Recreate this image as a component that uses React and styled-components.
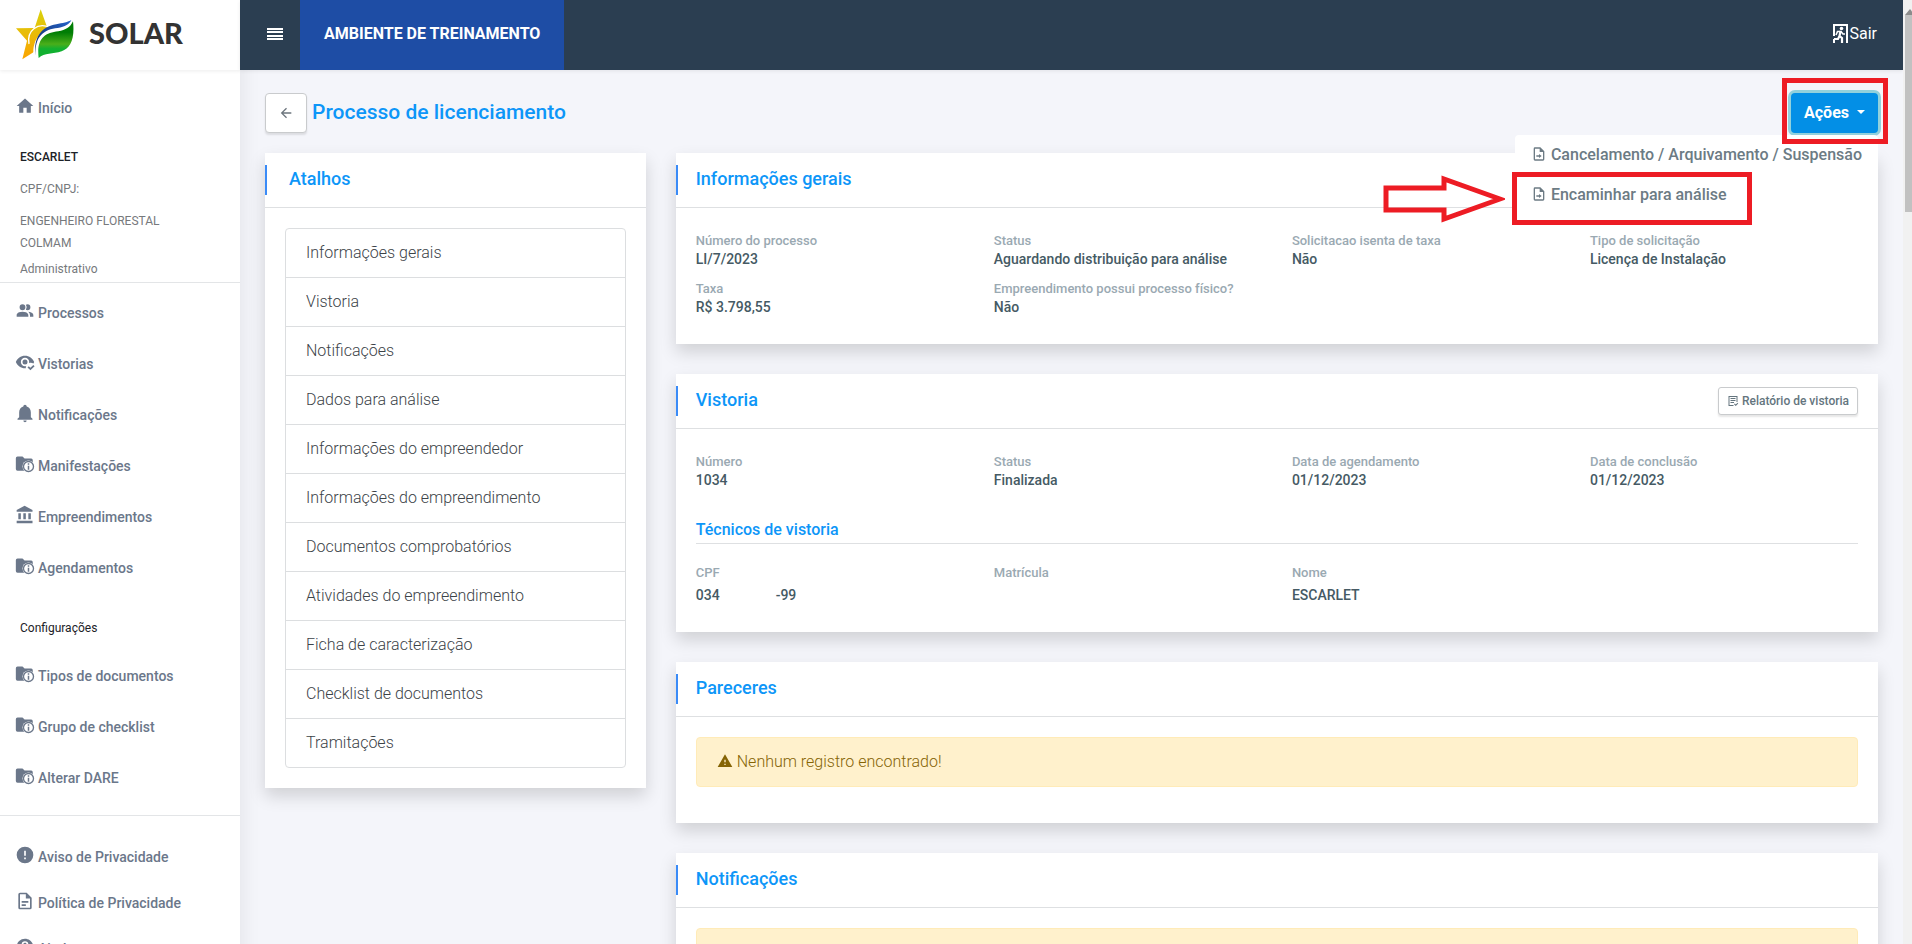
import React from 'react';
import styled, { createGlobalStyle } from 'styled-components';

const icons = {
    home: 'M10,20V14H14V20H19V12H22L12,3L2,12H5V20H10Z',
    people:
        'M16 17V19H2V17S2 13 9 13 16 17 16 17M12.5 7.5A3.5 3.5 0 1 0 9 11A3.5 3.5 0 0 0 12.5 7.5M15.94 13A5.32 5.32 0 0 1 18 17V19H22V17S22 13.37 15.94 13M15 4A3.39 3.39 0 0 0 13.07 4.59A5 5 0 0 1 13.07 10.41A3.39 3.39 0 0 0 15 11A3.5 3.5 0 0 0 15 4Z',
    eyeCheck:
        'M23.5,17L18.5,22L15,18.5L16.5,17L18.5,19L22,15.5L23.5,17M12,9A3,3 0 0,1 15,12A3,3 0 0,1 12,15A3,3 0 0,1 9,12A3,3 0 0,1 12,9M12,17C12.5,17 12.97,16.93 13.42,16.79C13.15,17.5 13,18.22 13,19V19.45L12,19.5C7,19.5 2.73,16.39 1,12C2.73,7.61 7,4.5 12,4.5C17,4.5 21.27,7.61 23,12C22.75,12.64 22.44,13.26 22.08,13.85C21.18,13.31 20.12,13 19,13C18.22,13 17.5,13.15 16.79,13.42C16.93,12.97 17,12.5 17,12A5,5 0 0,0 12,7A5,5 0 0,0 7,12A5,5 0 0,0 12,17Z',
    bell:
        'M21,19V20H3V19L5,17V11C5,7.9 7.03,5.17 10,4.29C10,4.19 10,4.1 10,4A2,2 0 0,1 12,2A2,2 0 0,1 14,4C14,4.1 14,4.19 14,4.29C16.97,5.17 19,7.9 19,11V17L21,19M14,21A2,2 0 0,1 12,23A2,2 0 0,1 10,21',
    bank: 'M11.5,1L2,6V8H21V6M16,10V17H19V10M2,22H21V19H2M10,10V17H13V10M4,10V17H7V10H4Z',
    alert:
        'M13,13H11V7H13M13,17H11V15H13M12,2A10,10 0 0,0 2,12A10,10 0 0,0 12,22A10,10 0 0,0 22,12A10,10 0 0,0 12,2Z',
    document:
        'M6,2A2,2 0 0,0 4,4V20A2,2 0 0,0 6,22H18A2,2 0 0,0 20,20V8L14,2H6M6,4H13V9H18V20H6V4M8,12V14H16V12H8M8,16V18H13V16H8Z',
    help:
        'M15.07,11.25L14.17,12.17C13.45,12.89 13,13.5 13,15H11V14.5C11,13.39 11.45,12.39 12.17,11.67L13.41,10.41C13.78,10.05 14,9.55 14,9C14,7.89 13.1,7 12,7A2,2 0 0,0 10,9H8A4,4 0 0,1 12,5A4,4 0 0,1 16,9C16,9.88 15.64,10.67 15.07,11.25M13,19H11V17H13M12,2A10,10 0 0,0 2,12A10,10 0 0,0 12,22A10,10 0 0,0 22,12C22,6.47 17.5,2 12,2Z',
    warning: 'M13,14H11V10H13M13,18H11V16H13M1,21H23L12,2L1,21Z',
    fileMove:
        'M6,2A2,2 0 0,0 4,4V20A2,2 0 0,0 6,22H18A2,2 0 0,0 20,20V8L14,2H6M6,4H13V9H18V20H6V4M8,14V16H12V18L16,15L12,12V14H8Z',
    arrowLeft: 'M20,11V13H8L13.5,18.5L12.08,19.92L4.16,12L12.08,4.08L13.5,5.5L8,11H20Z',
    report:
        'M3,2H21V14H19V4H5V20H13V22H3V2M7,6H17V8H7V6M7,10H17V12H7V10M7,14H14V16H7V14M22.5,17L17.5,22L14,18.5L15.5,17L17.5,19L21,15.5L22.5,17Z',
};

const Icon = ({ name, size = 20 }) => (
    <svg width={size} height={size} viewBox="0 0 24 24" fill="currentColor" aria-hidden="true">
        {name === 'folder' ? (
            <>
                <path d="M3 3H9L11.5 5.5H19.5A2 2 0 0 1 21.3 7.5V11H16L11 20H3A2 2 0 0 1 1 18V5A2 2 0 0 1 3 3Z" />
                <circle cx="16.2" cy="15" r="7.2" fill="#fff" />
                <circle cx="16.2" cy="15" r="6" fill="#fff" stroke="currentColor" strokeWidth="1.6" />
                <path d="M15.3 11H17.1V12.8H15.3ZM15.3 14H17.1V19H15.3Z" />
            </>
        ) : (
            <path d={icons[name]} fillRule="evenodd" />
        )}
    </svg>
);

const Logo = () => (
    <svg width="60" height="53" viewBox="44 24 180 159" aria-hidden="true">
        <defs>
            <linearGradient id="star" x1="0" y1="0" x2="0" y2="1">
                <stop offset="0" stopColor="#d8d20c" />
                <stop offset="1" stopColor="#fba300" />
            </linearGradient>
            <linearGradient id="leaf" x1="0" y1="0" x2="0" y2="1">
                <stop offset="0.3" stopColor="#007d05" />
                <stop offset="0.62" stopColor="#4aae1a" />
                <stop offset="0.75" stopColor="#12b030" />
            </linearGradient>
            <linearGradient id="wave" x1="0" y1="1" x2="1" y2="0">
                <stop offset="0" stopColor="#12285e" />
                <stop offset="1" stopColor="#2464cc" />
            </linearGradient>
        </defs>
        <path d="M121 28L139 78L170 84L110 150L66 178L80 122L47 85L103 84Z" fill="url(#star)" />
        <path d="M86 132C78 92 112 66 148 82" fill="none" stroke="#fff" strokeWidth="4" />
        <path d="M100 176C92 110 130 84 170 80C192 76 206 68 214 54L226 60L222 150L110 182Z" fill="#fff" />
        <path d="M106 167C102 108 132 88 172 84C194 80 208 72 213 60C204 66 186 69 168 73C124 80 98 112 106 167Z" fill="url(#wave)" />
        <path d="M115 174C108 118 132 98 174 94C196 90 210 82 218 64C224 118 210 144 184 154C158 163 132 158 115 174Z" fill="url(#leaf)" />
    </svg>
);

const ExitIcon = () => (
    <svg width="15" height="19" viewBox="0 0 15 19" fill="none" stroke="#fff" aria-hidden="true">
        <path d="M1 12V1H14V19M1 15V19" strokeWidth="2" />
        <circle cx="8.5" cy="4.5" r="1.8" fill="#fff" stroke="none" />
        <path d="M7.5 7L6.5 12L9 14V19M6.5 12L5 15H1" strokeWidth="2.2" />
        <path d="M3 11L4.5 7.5H8L10 10H12" strokeWidth="1.6" />
    </svg>
);

const menu = [
    ['people', 'Processos'],
    ['eyeCheck', 'Vistorias'],
    ['bell', 'Notificações'],
    ['folder', 'Manifestações'],
    ['bank', 'Empreendimentos'],
    ['folder', 'Agendamentos'],
];

const settings = ['Tipos de documentos', 'Grupo de checklist', 'Alterar DARE'];

const support = [
    ['alert', 'Aviso de Privacidade'],
    ['document', 'Política de Privacidade'],
    ['help', 'Ajuda'],
];

const shortcuts = [
    'Informações gerais',
    'Vistoria',
    'Notificações',
    'Dados para análise',
    'Informações do empreendedor',
    'Informações do empreendimento',
    'Documentos comprobatórios',
    'Atividades do empreendimento',
    'Ficha de caracterização',
    'Checklist de documentos',
    'Tramitações',
];

const general = [
    ['Número do processo', 'LI/7/2023'],
    ['Status', 'Aguardando distribuição para análise'],
    ['Solicitacao isenta de taxa', 'Não'],
    ['Tipo de solicitação', 'Licença de Instalação'],
    ['Taxa', 'R$ 3.798,55'],
    ['Empreendimento possui processo físico?', 'Não'],
];

const inspection = [
    ['Número', '1034'],
    ['Status', 'Finalizada'],
    ['Data de agendamento', '01/12/2023'],
    ['Data de conclusão', '01/12/2023'],
];

const MenuItem = ({ icon, children, compact }) => (
    <MenuLink href="#" $compact={compact}>
        <Icon name={icon} />
        {children}
    </MenuLink>
);

const Fields = ({ items }) => (
    <FieldGrid>
        {items.map(([label, value]) => (
            <Field key={label}>
                <Label>{label}</Label>
                <Value>{value}</Value>
            </Field>
        ))}
    </FieldGrid>
);

const Section = ({ title, action, wide, children }) => (
    <Card>
        <CardHeader>
            <CardTitle $wide={wide}>{title}</CardTitle>
            {action}
        </CardHeader>
        <CardBody>{children}</CardBody>
    </Card>
);

const EmptyMessage = () => (
    <Alert role="alert">
        <Icon name="warning" size={16} />
        Nenhum registro encontrado!
    </Alert>
);

export default function App() {
    return (
        <Page>
            <GlobalStyle />
            <Sidebar>
                <Brand>
                    <Logo />
                    <BrandName>SOLAR</BrandName>
                </Brand>
                <Nav>
                    <MenuItem icon="home">Início</MenuItem>
                    <User>
                        <UserName>ESCARLET</UserName>
                        <p>CPF/CNPJ:</p>
                        <p>
                            ENGENHEIRO FLORESTAL
                            <br />
                            COLMAM
                        </p>
                        <Role>Administrativo</Role>
                    </User>
                    <MenuGroup>
                        {menu.map(([icon, text]) => (
                            <MenuItem key={text} icon={icon}>
                                {text}
                            </MenuItem>
                        ))}
                    </MenuGroup>
                    <MenuCaption>Configurações</MenuCaption>
                    {settings.map(text => (
                        <MenuItem key={text} icon="folder">
                            {text}
                        </MenuItem>
                    ))}
                    <Support>
                        {support.map(([icon, text]) => (
                            <MenuItem key={text} icon={icon} compact>
                                {text}
                            </MenuItem>
                        ))}
                    </Support>
                </Nav>
            </Sidebar>
            <Main>
                <Topbar>
                    <MenuButton aria-label="Menu">
                        <svg width="16" height="12" viewBox="0 0 16 12" fill="#fff">
                            <path d="M0 0H16V2H0ZM0 3H16V5H0ZM0 7H16V9H0ZM0 10H16V12H0Z" />
                        </svg>
                    </MenuButton>
                    <Environment>AMBIENTE DE TREINAMENTO</Environment>
                    <Logout href="#">
                        <ExitIcon />
                        Sair
                    </Logout>
                </Topbar>
                <TitleRow>
                    <BackButton aria-label="Voltar">
                        <Icon name="arrowLeft" size={16} />
                    </BackButton>
                    <Title>Processo de licenciamento</Title>
                    <Actions>
                        <ActionsButton aria-expanded="true">
                            Ações
                            <Caret />
                        </ActionsButton>
                        <ButtonMark />
                        <Dropdown>
                            <DropdownItem href="#">
                                <Icon name="fileMove" size={16} />
                                Cancelamento / Arquivamento / Suspensão
                            </DropdownItem>
                            <DropdownItem href="#">
                                <Icon name="fileMove" size={16} />
                                Encaminhar para análise
                                <ItemMark />
                                <Arrow width="122" height="48" viewBox="0 0 122 48" aria-hidden="true">
                                    <path d="M3 13H61V4L117 24L61 44V35H3Z" />
                                </Arrow>
                            </DropdownItem>
                        </Dropdown>
                    </Actions>
                </TitleRow>
                <Columns>
                    <Column>
                        <Section title="Atalhos" wide>
                            <ShortcutList>
                                {shortcuts.map(text => (
                                    <li key={text}>
                                        <Shortcut href="#">{text}</Shortcut>
                                    </li>
                                ))}
                            </ShortcutList>
                        </Section>
                    </Column>
                    <Column>
                        <Section title="Informações gerais">
                            <Fields items={general} />
                        </Section>
                        <Section
                            title="Vistoria"
                            action={
                                <ReportButton>
                                    <Icon name="report" size={12} />
                                    Relatório de vistoria
                                </ReportButton>
                            }
                        >
                            <Fields items={inspection} />
                            <Subtitle>Técnicos de vistoria</Subtitle>
                            <FieldGrid>
                                <Technician>
                                    <Label>CPF</Label>
                                    <Document>
                                        <span>034</span>
                                        <span>-99</span>
                                    </Document>
                                </Technician>
                                <Technician>
                                    <Label>Matrícula</Label>
                                </Technician>
                                <Technician>
                                    <Label>Nome</Label>
                                    <Value>ESCARLET</Value>
                                </Technician>
                            </FieldGrid>
                        </Section>
                        <Section title="Pareceres">
                            <EmptyMessage />
                        </Section>
                        <Section title="Notificações">
                            <EmptyMessage />
                        </Section>
                    </Column>
                </Columns>
            </Main>
            <Scrollbar>
                <ScrollArrow />
                <ScrollThumb />
            </Scrollbar>
        </Page>
    );
}

const GlobalStyle = createGlobalStyle`
    * {
        box-sizing: border-box;
    }
    body {
        margin: 0;
        background: #f4f5fa;
        font-family: Roboto, sans-serif;
        font-size: 14px;
        color: #455a64;
    }
    h1, h2, h3, p, ul, dl {
        margin: 0;
        padding: 0;
        font-weight: 500;
    }
    a {
        color: inherit;
        text-decoration: none;
    }
    button {
        font: inherit;
        cursor: pointer;
    }
`;

const Page = styled.div`
    display: grid;
    grid-template-columns: 240px minmax(0, 1fr) 9px;
    height: 100vh;
    overflow: hidden;
`;

const Sidebar = styled.aside`
    background: #fff;
    box-shadow: 1px 0 20px rgba(0, 0, 0, 0.08);
    overflow: hidden;
`;

const Brand = styled.div`
    display: flex;
    align-items: center;
    gap: 14px;
    height: 70px;
    padding: 0 15px 2px;
    box-shadow: 0 1px 4px rgba(0, 0, 0, 0.08);
`;

const BrandName = styled.span`
    padding-bottom: 2px;
    font-family: Lato, sans-serif;
    font-size: 29px;
    line-height: 34px;
    font-weight: 900;
    color: #333;
`;

const Nav = styled.nav`
    padding-top: 12px;
`;

const MenuLink = styled.a`
    display: flex;
    align-items: center;
    gap: 3px;
    height: ${props => (props.$compact ? 46 : 51)}px;
    padding-left: 15px;
    font-weight: 500;
    color: #6b778a;

    svg {
        margin-bottom: 4px;
    }
`;

const User = styled.div`
    display: grid;
    gap: 10px;
    padding: 13px 20px 2px;
    border-bottom: 1px solid #e3e5e7;
    font-size: 12px;
    line-height: 22px;
    color: #76797c;

    p {
        font-weight: 400;
    }
`;

const UserName = styled.strong`
    font-weight: 500;
    color: #1c2227;
`;

const Role = styled.span`
    margin-top: -6px;
`;

const MenuGroup = styled.div`
    padding-top: 4px;
`;

const MenuCaption = styled.h3`
    padding: 24px 20px 11px;
    font-size: 12px;
    line-height: 22px;
    font-weight: 400;
    color: #1c2227;
`;

const Support = styled.div`
    margin-top: 12px;
    padding-top: 18px;
    border-top: 1px solid #e3e5e7;
`;

const Main = styled.main`
    min-width: 0;
`;

const Topbar = styled.header`
    display: flex;
    align-items: center;
    height: 70px;
    padding-right: 26px;
    background: #2b3e51;
    color: #fff;
    font-size: 16px;
    box-shadow: 0 1px 4px rgba(0, 0, 0, 0.08);
`;

const MenuButton = styled.button`
    width: 60px;
    height: 100%;
    padding: 0 0 2px 10px;
    border: 0;
    background: none;
`;

const Environment = styled.div`
    padding: 0 24px 2px;
    line-height: 68px;
    font-weight: 700;
    background: #1e4da5;
`;

const Logout = styled.a`
    display: flex;
    align-items: center;
    gap: 1px;
    margin-left: auto;
    padding-bottom: 4px;
`;

const TitleRow = styled.div`
    display: flex;
    align-items: center;
    gap: 5px;
    padding: 23px 25px 20px;
`;

const BackButton = styled.button`
    display: flex;
    align-items: center;
    justify-content: center;
    width: 42px;
    height: 40px;
    border: 1px solid #c9cbcd;
    border-radius: 4px;
    background: #fff;
    color: #6c757d;
    box-shadow: 0 2px 2px rgba(0, 0, 0, 0.1);
`;

const Title = styled.h1`
    padding-bottom: 2px;
    font-size: 21px;
    line-height: 38px;
    color: #0d96f8;
`;

const Actions = styled.div`
    position: relative;
    margin-left: auto;
    z-index: 1;
`;

const ActionsButton = styled.button`
    display: flex;
    align-items: center;
    gap: 8px;
    height: 40px;
    padding: 0 13px 2px;
    border: 0;
    border-radius: 4px;
    background: #038fe6;
    box-shadow: 0 0 0 3px #92d1dc;
    color: #fff;
    font-size: 16px;
    font-weight: 700;
`;

const Caret = styled.span`
    border: 4px solid transparent;
    border-top-color: #fff;
    border-bottom: 0;
`;

// red frames drawn over the controls to point at the next step
const Mark = styled.span`
    position: absolute;
    border: 5px solid #ed1c24;
    pointer-events: none;
`;

const ButtonMark = styled(Mark)`
    inset: -15px -10px -11px -9px;
    z-index: 2;
`;

const Dropdown = styled.div`
    position: absolute;
    top: 42px;
    right: 0;
    border-radius: 4px;
    background: #fff;
    font-size: 16px;
    font-weight: 500;
    color: #6c7b84;
`;

const DropdownItem = styled.a`
    position: relative;
    display: flex;
    align-items: center;
    gap: 4px;
    height: 40px;
    padding: 0 16px 2px;
    white-space: nowrap;
`;

const ItemMark = styled(Mark)`
    top: -3px;
    left: -3px;
    width: 240px;
    height: 53px;
`;

const Arrow = styled.svg`
    position: absolute;
    top: 0;
    right: calc(100% + 10px);
    fill: none;
    stroke: #ed1c24;
    stroke-width: 5px;
`;

const Columns = styled.div`
    display: grid;
    grid-template-columns: minmax(0, 1fr) minmax(0, 3fr);
    align-items: start;
    padding: 0 10px;
`;

const Column = styled.div`
    display: grid;
    gap: 30px;
    padding: 0 15px;
`;

const Card = styled.section`
    background: #fff;
    box-shadow: 0 8px 16px rgba(0, 0, 0, 0.15);
`;

const CardHeader = styled.div`
    display: flex;
    align-items: center;
    justify-content: space-between;
    padding: 12px 20px 12px 0;
    border-bottom: 1px solid #dee0e2;
`;

const CardTitle = styled.h2`
    padding-left: ${props => (props.$wide ? 22 : 18)}px;
    padding-bottom: 2px;
    border-left: 2px solid #3a8bf7;
    font-size: 18px;
    line-height: 28px;
    color: #0d96f8;
`;

const CardBody = styled.div`
    padding: 20px;
`;

const ReportButton = styled.button`
    display: flex;
    align-items: center;
    gap: 3px;
    height: 28px;
    padding: 0 8px;
    border: 1px solid #c9cbcd;
    border-radius: 3px;
    background: #fff;
    box-shadow: 0 2px 2px rgba(0, 0, 0, 0.1);
    color: #64757e;
    font-size: 12px;
    font-weight: 500;
`;

const ShortcutList = styled.ul`
    border: 1px solid #dcdee0;
    border-radius: 4px;
    list-style: none;

    li + li {
        border-top: 1px solid #dcdee0;
    }
`;

const Shortcut = styled.a`
    display: block;
    padding: 0 20px;
    font-size: 16px;
    line-height: 48px;
    font-weight: 300;
    color: #3c4348;
`;

const FieldGrid = styled.dl`
    display: grid;
    grid-template-columns: repeat(4, minmax(0, 1fr));
    column-gap: 30px;
`;

const Field = styled.div`
    padding: 4px 0 8px;
    line-height: 18px;
`;

const Technician = styled(Field)`
    padding: 0 0 6px;
    line-height: 22px;
`;

const Label = styled.dt`
    font-size: 13px;
    font-weight: 500;
    color: #9aa9b2;
`;

const Value = styled.dd`
    margin: 0;
    font-weight: 500;
    color: #455a64;
`;

const Document = styled(Value)`
    display: flex;
    gap: 56px;
`;

const Subtitle = styled.h3`
    margin: 20px 0 18px;
    border-bottom: 1px solid #dee0e2;
    font-size: 16px;
    line-height: 26px;
    color: #0d96f8;
`;

const Alert = styled.div`
    display: flex;
    align-items: center;
    gap: 4px;
    height: 50px;
    margin-bottom: 16px;
    padding: 0 20px 2px;
    border: 1px solid #ffebb8;
    border-radius: 4px;
    background: #fff1cc;
    font-size: 16px;
    font-weight: 300;
    color: #856404;
`;

const Scrollbar = styled.div`
    background: #f1f1f1;
    padding-left: 2px;
`;

const ScrollArrow = styled.div`
    width: 0;
    height: 15px;
    border: 5px solid transparent;
    border-bottom-color: #8b8b8b;
    border-top-width: 4px;
    border-bottom-width: 6px;
`;

const ScrollThumb = styled.div`
    height: 197px;
    background: #c1c1c1;
`;
